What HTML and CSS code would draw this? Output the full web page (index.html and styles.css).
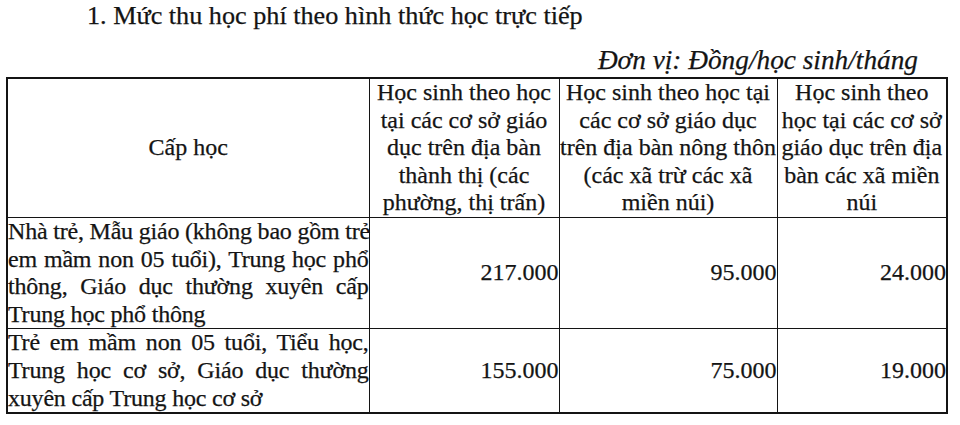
FILE: index.html
```html
<!DOCTYPE html>
<html lang="vi">
<head>
<meta charset="utf-8">
<link rel="stylesheet" href="styles.css">
</head>
<body>
<div class="page">
  <p class="title">1. Mức thu học phí theo hình thức học trực tiếp</p>
  <p class="unit">Đơn vị: Đồng/học sinh/tháng</p>
  <table class="fees">
    <colgroup>
      <col class="c1"><col class="c2"><col class="c3"><col class="c4">
    </colgroup>
    <thead>
      <tr>
        <th>Cấp học</th>
        <th>Học sinh theo học<br>tại các cơ sở giáo<br>dục trên địa bàn<br>thành thị (các<br>phường, thị trấn)</th>
        <th>Học sinh theo học tại<br>các cơ sở giáo dục<br>trên địa bàn nông thôn<br>(các xã trừ các xã<br>miền núi)</th>
        <th>Học sinh theo<br>học tại các cơ sở<br>giáo dục trên địa<br>bàn các xã miền<br>núi</th>
      </tr>
    </thead>
    <tbody>
      <tr>
        <td class="level">
          <span class="ln">Nhà trẻ, Mẫu giáo (không bao gồm trẻ</span>
          <span class="ln">em mầm non 05 tuổi), Trung học phổ</span>
          <span class="ln">thông, Giáo dục thường xuyên cấp</span>
          <span class="ln last">Trung học phổ thông</span>
        </td>
        <td class="num">217.000</td>
        <td class="num">95.000</td>
        <td class="num">24.000</td>
      </tr>
      <tr>
        <td class="level">
          <span class="ln">Trẻ em mầm non 05 tuổi, Tiểu học,</span>
          <span class="ln">Trung học cơ sở, Giáo dục thường</span>
          <span class="ln last">xuyên cấp Trung học cơ sở</span>
        </td>
        <td class="num">155.000</td>
        <td class="num">75.000</td>
        <td class="num">19.000</td>
      </tr>
    </tbody>
  </table>
</div>
</body>
</html>
```
FILE: styles.css
```css
html, body {
  margin: 0;
  padding: 0;
  background: #ffffff;
}
.page {
  font-family: "Liberation Serif", "Times New Roman", serif;
  color: #141414;
  font-size: 24px;
  line-height: 27.6px;
  padding: 0 0 0 6px;
  -webkit-text-stroke: 0.25px #141414;
}
.title {
  margin: 0;
  padding: 1px 0 0 81px;
  font-size: 26.2px;
  line-height: 30px;
  height: 40px;
  box-sizing: border-box;
}
.unit {
  margin: 0;
  font-style: italic;
  font-size: 27.3px;
  line-height: 30px;
  text-align: right;
  padding-right: 42px;
  height: 37px;
  box-sizing: border-box;
  padding-top: 5px;
}
.fees {
  border-collapse: collapse;
  width: 940px;
  table-layout: fixed;
  border: 2px solid #141414;
}
.c1 { width: 362px; }
.c2 { width: 190px; }
.c3 { width: 218px; }
.c4 { width: 170px; }
.fees th,
.fees td {
  border: 1.5px solid #141414;
  padding: 0;
  vertical-align: middle;
}
.fees th {
  font-weight: normal;
  text-align: center;
  white-space: nowrap;
}
.level .ln {
  display: block;
  text-align: justify;
  text-align-last: justify;
  white-space: nowrap;
  letter-spacing: -0.2px;
}
.level .ln.last {
  text-align-last: left;
}
.num {
  text-align: right;
}
```
